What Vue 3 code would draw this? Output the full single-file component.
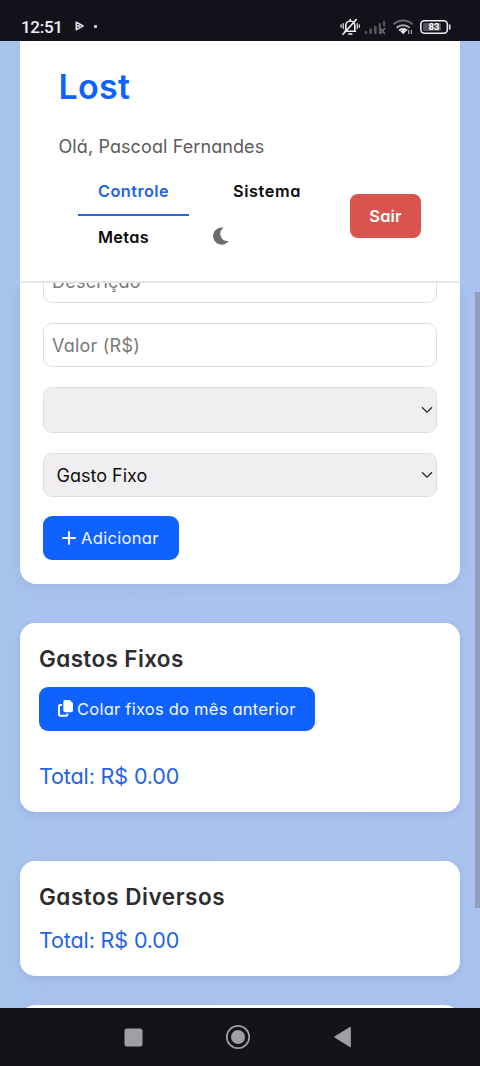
<script setup>
import { ref } from 'vue'

const description = ref('')
const amount = ref('')
</script>

<template>
  <div class="screen">
    <div class="statusbar">
      <span class="clock">12:51</span>
      <svg class="play" width="10" height="10" viewBox="0 0 10 10"><path d="M1.3 1.2 8 5 1.3 8.6ZM1.5 5H5" fill="none" stroke="#e4e3ea" stroke-width="1.6" stroke-linejoin="round" /></svg>
      <span class="dot"></span>
      <svg class="system" width="114" height="20" viewBox="0 0 114 20">
        <g fill="none" stroke="#eeedf3" stroke-width="1.6" stroke-linecap="round">
          <path d="M4.5 14.3h11M5.8 14V8.5a4.5 4.5 0 0 1 9 0V14M10.2 3.8V2.6M8.8 17h3M3 17.3 16.2 2.6" />
          <path d="M3.2 6.5v5M1 7.8v2.4M17.2 6.5v5M19.3 7.8v2.4" stroke-width="1.2" />
        </g>
        <g fill="#55545c">
          <rect x="24.6" y="14" width="2.6" height="3" rx="1" /><rect x="29.3" y="11.5" width="2.6" height="5.5" rx="1" /><rect x="34" y="9" width="2.6" height="8" rx="1" /><rect x="38.7" y="6" width="2.2" height="11" rx="1" /><rect x="43" y="3.5" width="2.2" height="6" rx="1" />
        </g>
        <path d="m40 11 5 6m0-6-5 6" stroke="#66656d" stroke-width="1.7" />
        <g fill="none" stroke-width="2">
          <path d="M53.6 7.4a13.5 13.5 0 0 1 19 0" stroke="#66656e" />
          <path d="M56.6 10.8a9.3 9.3 0 0 1 13 0" stroke="#aaa9b1" />
          <path d="M59.2 13.5a5.8 5.8 0 0 1 7.8 0" stroke="#f2f1f7" />
        </g>
        <path d="m60.4 14.2 2.8 3 2.8-3a4.4 4.4 0 0 0-5.6 0Z" fill="#f2f1f7" />
        <path d="M68.6 13v4M71.4 13v4" stroke="#aaa9b1" stroke-width="1.2" />
        <rect x="80.8" y="3.8" width="26.6" height="12.4" rx="3.8" fill="none" stroke="#eeedf3" stroke-width="1.6" />
        <rect x="83" y="6" width="18" height="8" rx="1.5" fill="#55545c" />
        <path d="M109.8 8v4" stroke="#d4d3da" stroke-width="1.6" stroke-linecap="round" />
        <text x="94" y="13.3" text-anchor="middle" fill="#fff" font-family="Roboto, sans-serif" font-size="9.5" font-weight="700">83</text>
      </svg>
    </div>

    <main class="page">
      <header class="header">
        <h1 class="brand">Lost</h1>
        <p class="greeting">Olá, Pascoal Fernandes</p>
        <div class="bar">
          <nav class="nav">
            <a class="link active">Controle</a>
            <a class="link sistema">Sistema</a>
            <a class="link metas">Metas</a>
            <svg class="moon" width="16" height="18" viewBox="0 0 16 18"><path d="M9 .5A8.6 8.6 0 1 0 15.3 14.6c.3-.4.1-.8-.4-.7A7.1 7.1 0 0 1 10 1.3C10.4 1 10.3.6 9 .5Z" fill="#6b6c70" /></svg>
          </nav>
          <button class="logout">Sair</button>
        </div>
      </header>

      <section class="form-card">
        <input v-model="description" class="field first" placeholder="Descrição" />
        <input v-model="amount" class="field" placeholder="Valor (R$)" />
        <div class="field select tall">
          <span></span>
          <svg width="12" height="8" viewBox="0 0 12 8"><path d="m1 1.3 5 4.9 5-4.9" fill="none" stroke="#222" stroke-width="1.2" /></svg>
        </div>
        <div class="field select">
          <span>Gasto Fixo</span>
          <svg width="12" height="8" viewBox="0 0 12 8"><path d="m1 1.3 5 4.9 5-4.9" fill="none" stroke="#222" stroke-width="1.2" /></svg>
        </div>
        <button class="primary add">
          <svg width="14" height="14" viewBox="0 0 14 14"><path d="M7 1v12M1 7h12" stroke="#fff" stroke-width="1.9" stroke-linecap="round" /></svg>
          <span>Adicionar</span>
        </button>
      </section>

      <section class="card fixed">
        <h2>Gastos Fixos</h2>
        <button class="primary paste">
          <svg width="15" height="17" viewBox="0 0 15 17"><path d="M7 0h4.6L15 3.3v7.2a1.7 1.7 0 0 1-1.7 1.7H7a1.7 1.7 0 0 1-1.7-1.7V1.7A1.7 1.7 0 0 1 7 0Z" fill="#fff" /><path d="M4 5H2.2A1.2 1.2 0 0 0 1 6.2v8.4a1.2 1.2 0 0 0 1.2 1.2h6a1.2 1.2 0 0 0 1.2-1.2v-1" fill="none" stroke="#fff" stroke-width="1.9" /></svg>
          <span>Colar fixos do mês anterior</span>
        </button>
        <p class="total">Total: R$ 0.00</p>
      </section>

      <section class="card various">
        <h2>Gastos Diversos</h2>
        <p class="total">Total: R$ 0.00</p>
      </section>

      <section class="card next"></section>
      <span class="scrollbar"></span>
    </main>

    <footer class="softkeys">
      <svg width="480" height="58" viewBox="0 0 480 58" fill="#a09fa6">
        <rect x="124.5" y="20.5" width="18" height="18" rx="2.5" />
        <circle cx="238" cy="29" r="11.2" fill="none" stroke="#a09fa6" stroke-width="1.7" />
        <circle cx="238" cy="29" r="7" />
        <path d="M350.3 19.2v19.6L334.5 29Z" stroke="#a09fa6" stroke-linejoin="round" />
      </svg>
    </footer>
  </div>
</template>

<style>
body { background: #a9c2ee; }
</style>

<style scoped>
.screen {
  width: 480px;
  height: 1066px;
  display: flex;
  flex-direction: column;
  overflow: hidden;
  font-family: Inter, "Open Sans", sans-serif;
  font-feature-settings: "cv11";
}
.screen * { box-sizing: border-box; }
h1, h2, p { margin: 0; }
button, input { font: inherit; font-feature-settings: inherit; }
.statusbar {
  height: 41px;
  flex: none;
  display: flex;
  align-items: center;
  padding: 13px 26px 0 21px;
  background: #13121b;
  color: #eeedf4;
}
.clock { width: 54px; font: 500 17px/26px Roboto, sans-serif; letter-spacing: -.3px; }
.play { margin-top: -2px; }
.dot { width: 3px; height: 3px; margin: -1px 0 0 9px; border-radius: 1px; background: #dddce4; }
.system { margin-left: auto; }
.page {
  position: relative;
  flex: 1;
  min-height: 0;
  overflow: hidden;
  padding: 0 20px 0 19.5px;
  background: linear-gradient(90deg, #a4c5ea 0, #a9c2ed 36px, #a9c2ef 460px, #a8c1ee 100%);
}
.header {
  height: 242px;
  padding: 23px 39px 0;
  background: #fff;
  border-bottom: 2px solid #e9e8ec;
}
.brand { height: 46px; color: #0f62fe; font-size: 34px; font-weight: 600; line-height: 46px; letter-spacing: .3px; }
.greeting { margin-top: 23px; height: 28px; color: #5b5b5b; font-size: 18px; line-height: 28px; letter-spacing: .1px; }
.bar { display: flex; justify-content: space-between; margin-top: 7px; }
.nav { width: 270px; padding-left: 19.5px; display: grid; grid-template-columns: 111px 135px; grid-template-rows: 48px 42px; column-gap: 24px; }
.link { height: 48px; padding: 9px 0 0 20px; color: #0a0a0a; font-size: 16.3px; font-weight: 600; line-height: 28px; letter-spacing: .45px; white-space: nowrap; }
.active { color: #2463e3; border-bottom: 2px solid #2463e3; }
.sistema { letter-spacing: .6px; }
.metas { padding-top: 7px; letter-spacing: .35px; }
.moon { margin: 10.5px 0 0 -.5px; }
.logout { width: 71px; height: 44px; margin: 26px 0 0; padding: 0; border: 0; border-radius: 8px; background: #d9534f; color: #fff; font-size: 16.5px; font-weight: 600; letter-spacing: .15px; }
.form-card {
  height: 301px;
  display: flex;
  flex-direction: column;
  align-items: stretch;
  padding: 0 23.5px;
  overflow: hidden;
  background: #fff;
  border-radius: 0 0 16px 16px;
  box-shadow: 0 4px 10px rgba(80, 100, 160, .1);
}
.field {
  width: 100%;
  height: 44px;
  flex: none;
  margin: 0 0 20px;
  padding: 0 8px;
  border: 1.5px solid #dedde1;
  border-radius: 9px;
  background: #fff;
  font-size: 18px;
  letter-spacing: .22px;
  outline: 0;
}
.field::placeholder { color: #7a7a7a; opacity: 1; }
.first { margin-top: -24px; }
.select { display: flex; align-items: center; justify-content: space-between; padding: 0 3px 0 12.5px; background: #f0eef0; color: #111; letter-spacing: 0; }
.tall { height: 46px; }
.primary {
  height: 44px;
  display: flex;
  align-items: center;
  padding: 0 0 1px 19px;
  border: 0;
  border-radius: 9px;
  background: #0f62fe;
  color: #f4f8ff;
  font-size: 16.5px;
  white-space: nowrap;
}
.primary svg { flex: none; }
.add { width: 136px; flex: none; margin-top: -.6px; }
.add span { margin-left: 5px; letter-spacing: .33px; }
.card {
  padding: 20px 19.5px 0;
  border-radius: 15px;
  background: #fff;
  box-shadow: 0 3px 7px rgba(80, 90, 150, .14);
}
.fixed { height: 188.6px; margin-top: 39.4px; }
.various { height: 115px; margin-top: 49px; }
.next { height: 115px; margin-top: 29.5px; }
.card h2 { height: 32px; color: #2d2d30; font-size: 22.5px; font-weight: 600; line-height: 32px; letter-spacing: .37px; }
.various h2 { letter-spacing: .52px; }
.paste { width: 276px; margin-top: 12px; }
.paste span { margin-left: 4px; letter-spacing: .24px; }
.total { color: #2463e3; font-size: 21.5px; line-height: 32px; letter-spacing: -.13px; }
.fixed .total { margin-top: 29px; }
.various .total { margin-top: 11px; }
.scrollbar { position: absolute; top: 251px; right: 0; width: 5px; height: 616px; background: #929db9; }
.softkeys { height: 58px; flex: none; background: #13131a; }
.softkeys svg { display: block; }
</style>
